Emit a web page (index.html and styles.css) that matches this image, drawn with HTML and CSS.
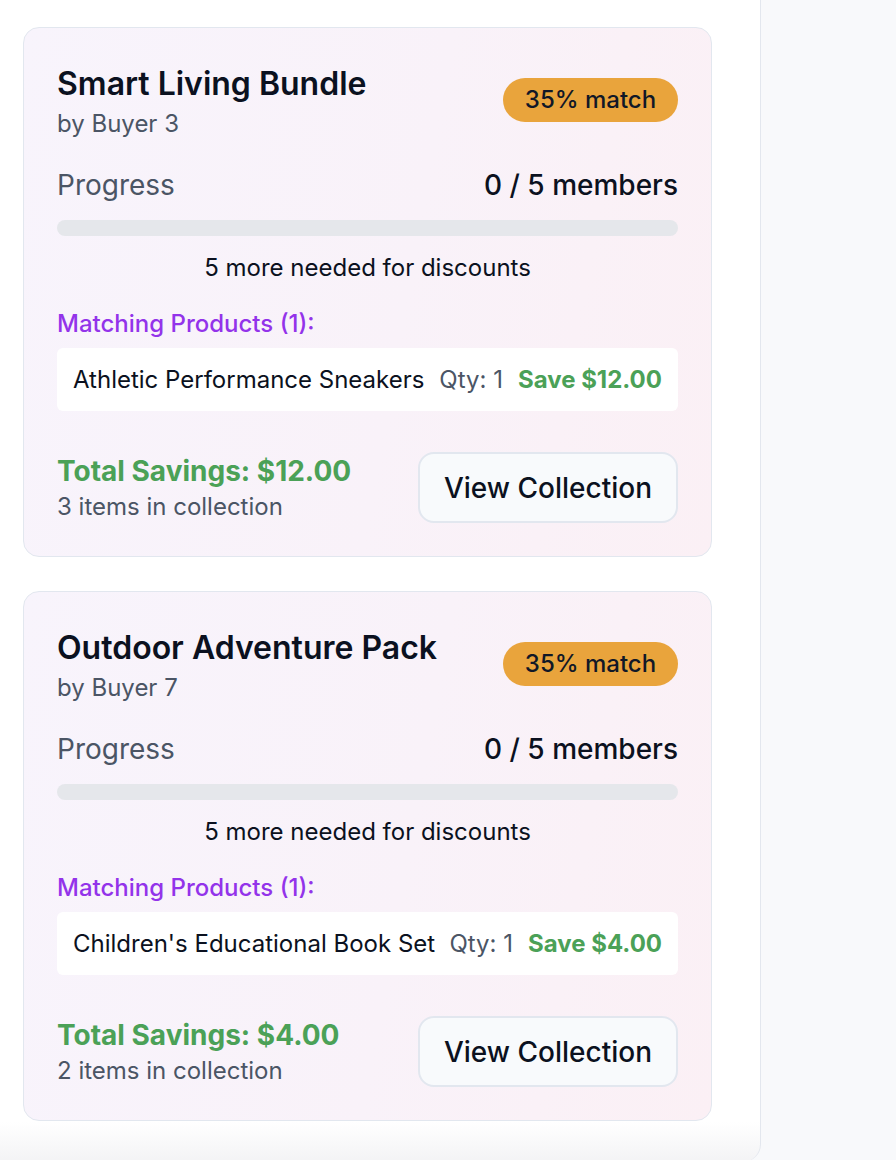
FILE: index.html
```html
<!DOCTYPE html>
<html lang="en">
<head>
<meta charset="utf-8">
<title>Matching Collections</title>
<link rel="stylesheet" href="styles.css">
</head>
<body>
<div class="page">
  <aside class="panel">
    <div class="card">
      <div class="card-head">
        <div>
          <h2 class="title">Smart Living Bundle</h2>
          <div class="owner">by Buyer 3</div>
        </div>
        <span class="badge">35% match</span>
      </div>
      <div class="progress-row">
        <span class="progress-label">Progress</span>
        <span class="progress-count">0 / 5 members</span>
      </div>
      <div class="bar"><div class="bar-fill" style="width:0%"></div></div>
      <div class="needed">5 more needed for discounts</div>
      <div class="match-title">Matching Products (1):</div>
      <div class="product">
        <span class="product-name">Athletic Performance Sneakers</span>
        <span class="product-meta"><span class="qty">Qty: 1</span><span class="save">Save $12.00</span></span>
      </div>
      <div class="card-foot">
        <div>
          <div class="total">Total Savings: $12.00</div>
          <div class="items">3 items in collection</div>
        </div>
        <button class="view-btn">View Collection</button>
      </div>
    </div>

    <div class="card">
      <div class="card-head">
        <div>
          <h2 class="title">Outdoor Adventure Pack</h2>
          <div class="owner">by Buyer 7</div>
        </div>
        <span class="badge">35% match</span>
      </div>
      <div class="progress-row">
        <span class="progress-label">Progress</span>
        <span class="progress-count">0 / 5 members</span>
      </div>
      <div class="bar"><div class="bar-fill" style="width:0%"></div></div>
      <div class="needed">5 more needed for discounts</div>
      <div class="match-title">Matching Products (1):</div>
      <div class="product">
        <span class="product-name">Children's Educational Book Set</span>
        <span class="product-meta"><span class="qty">Qty: 1</span><span class="save">Save $4.00</span></span>
      </div>
      <div class="card-foot">
        <div>
          <div class="total">Total Savings: $4.00</div>
          <div class="items">2 items in collection</div>
        </div>
        <button class="view-btn">View Collection</button>
      </div>
    </div>
  </aside>
  <main class="rest"></main>
</div>
</body>
</html>
```

FILE: styles.css
```css
* { box-sizing: border-box; }
html, body { margin: 0; padding: 0; }
body {
  font-family: Inter, "Noto Sans", "Liberation Sans", sans-serif;
  background: #f8f9fb;
  color: #0b1120;
  overflow: hidden;
  height: 1160px;
}
.page {
  display: flex;
  height: 1160px;
}
.panel {
  width: 761px;
  height: 1162px;
  flex: none;
  background: linear-gradient(to bottom, #ffffff 0, #ffffff 1122px, #f3f3f5 1162px);
  border-right: 1px solid #e3e7ee;
  border-bottom-right-radius: 18px;
  padding: 27px 0 0 23px;
  display: flex;
  flex-direction: column;
  gap: 34px;
}
.rest { flex: 1; }
.card {
  width: 689px;
  border: 1px solid #e2e7ef;
  border-radius: 16px;
  background: linear-gradient(100deg, #f8f4fc 0%, #f9f2f9 55%, #fbf0f5 100%);
  padding: 34px 33px 33px 33px;
}
.card-head {
  display: flex;
  justify-content: space-between;
  align-items: center;
}
.title {
  margin: 0;
  font-size: 32px;
  line-height: 44px;
  font-weight: 600;
  color: #0b1120;
}
.owner {
  margin-top: 4px;
  font-size: 24px;
  line-height: 28px;
  color: #4b5565;
}
.badge {
  background: #e9a43c;
  color: #111827;
  font-size: 24px;
  line-height: 28px;
  padding: 8px 0;
  border-radius: 999px;
  font-weight: 500;
  width: 175px;
  text-align: center;
  white-space: nowrap;
}
.progress-row {
  margin-top: 31px;
  display: flex;
  justify-content: space-between;
  align-items: center;
  font-size: 28px;
  line-height: 32px;
}
.progress-label { color: #4b5565; }
.progress-count { color: #0b1120; font-weight: 500; }
.bar {
  margin-top: 19px;
  height: 16px;
  background: #e5e7eb;
  border-radius: 999px;
  overflow: hidden;
}
.bar-fill { height: 100%; background: #9333ea; }
.needed {
  margin-top: 18px;
  text-align: center;
  font-size: 24px;
  line-height: 28px;
  color: #0b1120;
}
.match-title {
  margin-top: 28px;
  font-size: 24px;
  line-height: 28px;
  font-weight: 500;
  color: #9333ea;
}
.product {
  margin-top: 10px;
  background: #ffffff;
  border-radius: 6px;
  height: 63px;
  padding: 0 16px 0 16px;
  display: flex;
  align-items: center;
  justify-content: space-between;
  gap: 8px;
  font-size: 24px;
  line-height: 28px;
  white-space: nowrap;
}
.product-name { color: #0b1120; }
.product-meta { display: flex; gap: 15px; }
.qty { color: #4b5565; }
.save { color: #4ba157; font-weight: 700; }
.card-foot {
  margin-top: 41px;
  display: flex;
  justify-content: space-between;
  align-items: center;
}
.total {
  font-size: 28px;
  line-height: 32px;
  font-weight: 700;
  color: #4ba157;
}
.items {
  margin-top: 6px;
  font-size: 24px;
  line-height: 28px;
  color: #4b5565;
}
.view-btn {
  width: 260px;
  height: 71px;
  border: 2px solid #e2e7ef;
  border-radius: 16px;
  background: #f8fafc;
  font-family: inherit;
  font-size: 28px;
  font-weight: 500;
  color: #0b1120;
  cursor: pointer;
}
```
